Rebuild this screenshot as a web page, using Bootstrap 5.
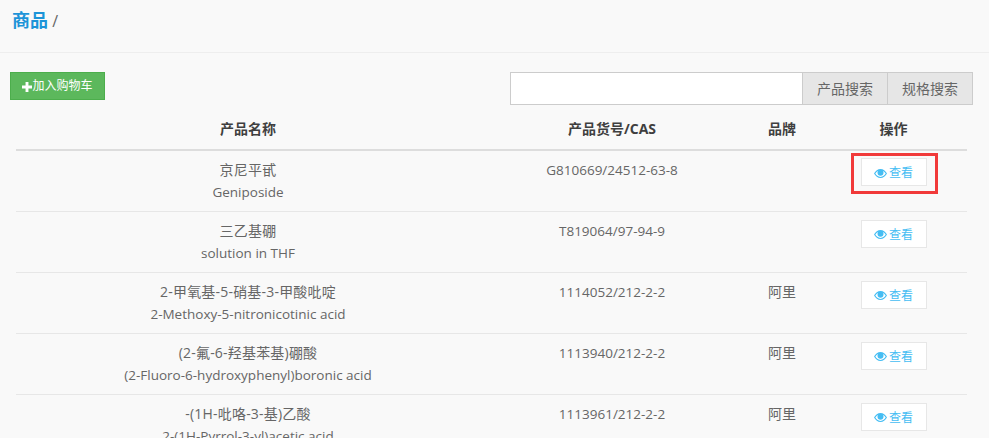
<!DOCTYPE html>
<html lang="zh-CN">
<head>
    <meta charset="UTF-8">
    <meta name="viewport" content="width=device-width, initial-scale=1.0">
    <title>商品</title>
    <link href="https://cdn.jsdelivr.net/npm/bootstrap@5.3.0/dist/css/bootstrap.min.css" rel="stylesheet">
    <style>
        html, body {
            height: 438px;
            overflow: hidden;
        }
        body {
            background-color: #f9f9f9;
            color: #666666;
            font-family: "Open Sans", "Noto Sans CJK SC", sans-serif;
            font-size: 13.5px;
        }
        .page-head {
            height: 53px;
            padding: 7px 12px 0;
            border-bottom: 1px solid #eeeeee;
            font-size: 16px;
            line-height: 26px;
        }
        .page-head b {
            color: #1c94d8;
            font-size: 18px;
            font-weight: 700;
        }
        .tool-bar {
            padding: 19px 16px 0 10px;
        }
        .btn-add {
            width: 95px;
            height: 28px;
            padding: 0;
            font-size: 12px;
            line-height: 26px;
            color: #fff;
            background-color: #5cb85c;
            border: 1px solid #4cae4c;
            border-radius: 0;
        }
        .search-box {
            width: 463px;
            height: 33px;
        }
        .search-box input {
            height: 33px;
            border: 1px solid #cccccc;
            border-radius: 0;
            background-color: #fff;
        }
        .search-box .input-group-text {
            width: 86px;
            height: 33px;
            justify-content: center;
            padding: 0;
            font-size: 14px;
            color: #666666;
            background-color: #e6e6e6;
            border: 1px solid #cccccc;
            border-radius: 0;
        }
        .goods-wrap {
            padding: 8px 22px 0 16px;
        }
        .goods-table {
            table-layout: fixed;
            width: 951px;
            margin: 0;
            --bs-table-bg: transparent;
            --bs-table-color: #666666;
        }
        .goods-table th {
            height: 37px;
            padding: 6px 0 0;
            vertical-align: top;
            font-size: 14px;
            font-weight: 700;
            line-height: 20px;
            color: #3f3f3f;
            border-bottom: 2px solid #dddddd;
        }
        .goods-table td {
            height: 61px;
            padding: 8px 0 0;
            vertical-align: top;
            line-height: 22px;
            border-bottom: 1px solid #e7e7e7;
        }
        .cn-name {
            display: block;
            font-size: 14px;
            letter-spacing: .2px;
        }
        .en-name {
            display: block;
        }
        .cn-brand {
            font-size: 14px;
        }
        .col-name { width: 464px; }
        .col-code { width: 264px; }
        .col-brand { width: 76px; }
        .btn-view {
            display: inline-flex;
            align-items: center;
            justify-content: center;
            gap: 2px;
            width: 66px;
            height: 28px;
            padding: 2px 0 0;
            font-size: 12px;
            color: #45bdf3;
            background-color: #fff;
            border: 1px solid #e7e7e7;
            border-radius: 0;
        }
        .mark-box {
            position: relative;
            display: inline-block;
            margin-top: -1px;
        }
        .mark-box::after {
            content: "";
            position: absolute;
            inset: -5px -11px -8px -10px;
            border: 3px solid #f13a3a;
        }
    </style>
</head>
<body>
    <div class="page-head"><b>商品</b> /</div>

    <div class="tool-bar d-flex justify-content-between align-items-start">
        <button type="button" class="btn btn-add"><svg width="10" height="10" viewBox="0 0 9 9" fill="#fff"><path d="M3.200 0h2.600v3.200H9v2.600H5.800V9H3.200V5.800H0V3.200h3.200z"/></svg>加入购物车</button>
        <div class="input-group flex-nowrap search-box">
            <input type="text" class="form-control" aria-label="搜索">
            <span class="input-group-text">产品搜索</span>
            <span class="input-group-text">规格搜索</span>
        </div>
    </div>

    <div class="goods-wrap">
        <table class="table goods-table text-center">
            <colgroup>
                <col class="col-name">
                <col class="col-code">
                <col class="col-brand">
                <col>
            </colgroup>
            <thead>
                <tr>
                    <th>产品名称</th>
                    <th>产品货号/CAS</th>
                    <th>品牌</th>
                    <th>操作</th>
                </tr>
            </thead>
            <tbody id="rows"></tbody>
        </table>
    </div>

    <script>
        const goods = [
            ['京尼平甙', 'Geniposide', 'G810669/24512-63-8', ''],
            ['三乙基硼', 'solution in THF', 'T819064/97-94-9', ''],
            ['2-甲氧基-5-硝基-3-甲酸吡啶', '2-Methoxy-5-nitronicotinic acid', '1114052/212-2-2', '阿里'],
            ['(2-氟-6-羟基苯基)硼酸', '(2-Fluoro-6-hydroxyphenyl)boronic acid', '1113940/212-2-2', '阿里'],
            ['-(1H-吡咯-3-基)乙酸', '2-(1H-Pyrrol-3-yl)acetic acid', '1113961/212-2-2', '阿里']
        ];
        const eye = '<svg width="13" height="9" viewBox="0 0 13 9"><path fill="#45bdf3" fill-rule="evenodd" d="M6.500 0C9.200 0 11.500 1.800 13 4.500 11.500 7.200 9.200 9 6.500 9S1.500 7.200 0 4.500C1.500 1.800 3.800 0 6.500 0zM1.300 4.500C2.400 6.400 4 7.700 6.500 7.900 9 7.700 10.600 6.400 11.700 4.500 10.900 3.200 10 2.300 8.800 1.700 9.300 2.300 9.500 3 9.500 3.800 9.500 5.500 8.200 6.800 6.500 6.800S3.500 5.500 3.500 3.800C3.500 3 3.700 2.300 4.200 1.700 3 2.300 2.100 3.200 1.300 4.500z"/></svg>';
        document.getElementById('rows').innerHTML = goods.map((g, i) => {
            const btn = `<button type="button" class="btn btn-view">${eye}查看</button>`;
            return `<tr>
                <td><span class="cn-name">${g[0]}</span><span class="en-name">${g[1]}</span></td>
                <td>${g[2]}</td>
                <td class="cn-brand">${g[3]}</td>
                <td>${i === 0 ? `<span class="mark-box">${btn}</span>` : btn}</td>
            </tr>`;
        }).join('');
    </script>
</body>
</html>
